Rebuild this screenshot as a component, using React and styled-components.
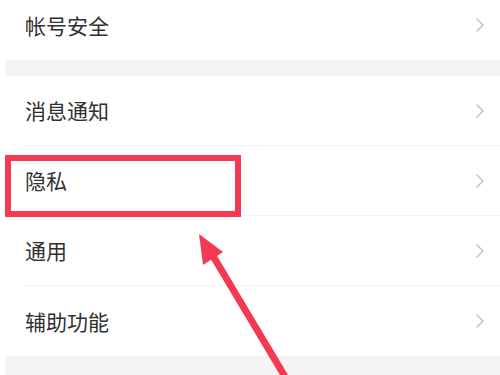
import React from "react";
import styled, { createGlobalStyle } from "styled-components";

const Global = createGlobalStyle`
  html, body { margin: 0; padding: 0; background: #ffffff; }
  body { width: 500px; height: 375px; overflow: hidden; }
  * { box-sizing: border-box; }
`;

const Page = styled.div`
  position: relative;
  width: 500px;
  height: 375px;
  overflow: hidden;
  background: #ffffff;
  padding-left: 5px;
  font-family: "Noto Sans CJK SC", "Noto Sans", sans-serif;
`;

const List = styled.div`
  display: flex;
  flex-direction: column;
  margin-top: -10px;
`;

const Group = styled.div`
  display: flex;
  flex-direction: column;
  background: #ffffff;
`;

const Band = styled.div`
  height: ${(p) => p.$h || 16}px;
  background: #f5f5f7;
  flex: none;
`;

const Row = styled.div`
  height: 70px;
  display: flex;
  align-items: center;
  padding-left: 20px;
  flex: none;
`;

const RowInner = styled.div`
  flex: 1;
  height: 100%;
  display: flex;
  align-items: center;
  justify-content: space-between;
  padding-right: 16px;
  border-bottom: ${(p) => (p.$last ? "none" : "1px solid #f3f3f5")};
`;

const Label = styled.span`
  font-size: 21px;
  color: #303030;
  line-height: 1;
`;

const Chevron = styled.svg`
  width: 8px;
  height: 14px;
  display: block;
`;

const Highlight = styled.div`
  position: absolute;
  left: 5px;
  top: 155px;
  width: 236px;
  height: 62px;
  border: 6px solid #f43a52;
  pointer-events: none;
`;

const Arrow = styled.svg`
  position: absolute;
  left: 0;
  top: 0;
  width: 500px;
  height: 375px;
  pointer-events: none;
`;

const ChevronIcon = () => (
  <Chevron viewBox="0 0 8 14">
    <path d="M1 1 L7 7 L1 13" fill="none" stroke="#bdbdbd" strokeWidth="1.4" strokeLinecap="round" strokeLinejoin="round" />
  </Chevron>
);

const Item = ({ label, last }) => (
  <Row>
    <RowInner $last={last}>
      <Label>{label}</Label>
      <ChevronIcon />
    </RowInner>
  </Row>
);

export default function App() {
  return (
    <>
      <Global />
      <Page>
        <List>
          <Group>
            <Item label="帐号安全" last />
          </Group>
          <Band />
          <Group>
            <Item label="消息通知" />
            <Item label="隐私" />
            <Item label="通用" />
            <Item label="辅助功能" last />
          </Group>
          <Band $h={30} />
        </List>
        <Highlight />
        <Arrow viewBox="0 0 500 375">
          <line x1="213" y1="256" x2="290" y2="385" stroke="#f43a52" strokeWidth="7" />
          <polygon points="199,234 223,252 203,265" fill="#f43a52" />
        </Arrow>
      </Page>
    </>
  );
}
